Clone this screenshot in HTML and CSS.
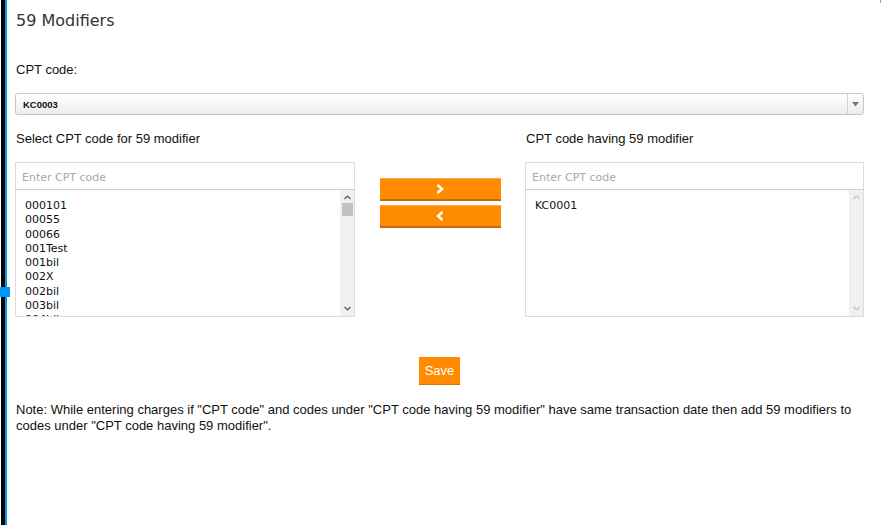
FILE: index.html
```html
<!DOCTYPE html>
<html lang="en">
<head>
    <meta charset="UTF-8">
    <title>59 Modifiers</title>
    <link rel="stylesheet" href="styles.css">
</head>
<body>
    <div class="shell">
        <div class="rail"></div>
        <div class="splitter-handle"></div>
        <div class="corner-mark"></div>

        <!-- Main panel -->
        <div class="content">
            <h1 class="title">59 Modifiers</h1>

            <p class="label top-label">CPT code:</p>
            <div class="select">
                <span class="select-value">KC0003</span>
                <span class="select-arrow">
                    <svg width="7" height="5" viewBox="0 0 7 5"><path d="M0 0 H7 L3.5 4.5 Z" fill="#777"/></svg>
                </span>
            </div>

            <div class="picker">
                <div class="column">
                    <p class="label">Select CPT code for 59 modifier</p>
                    <div class="search">Enter CPT code</div>
                    <div class="listbox">
                        <div class="items">
                            <div>000101</div>
                            <div>00055</div>
                            <div>00066</div>
                            <div>001Test</div>
                            <div>001bil</div>
                            <div>002X</div>
                            <div>002bil</div>
                            <div>003bil</div>
                            <div>004bil</div>
                        </div>
                        <div class="scrollbar">
                            <svg class="arrow" width="7" height="5" viewBox="0 0 7 5"><path d="M0.5 4 L3.5 1 L6.5 4" fill="none" stroke="#555" stroke-width="1.2"/></svg>
                            <div class="thumb"></div>
                            <div class="track"></div>
                            <svg class="arrow" width="7" height="5" viewBox="0 0 7 5"><path d="M0.5 1 L3.5 4 L6.5 1" fill="none" stroke="#555" stroke-width="1.2"/></svg>
                        </div>
                    </div>
                </div>

                <div class="movers">
                    <button class="move">
                        <svg width="8" height="10" viewBox="0 0 8 10"><path d="M1.5 1 L6 5 L1.5 9" fill="none" stroke="#fff" stroke-width="2.4"/></svg>
                    </button>
                    <button class="move">
                        <svg width="8" height="10" viewBox="0 0 8 10"><path d="M6.5 1 L2 5 L6.5 9" fill="none" stroke="#fff" stroke-width="2.4"/></svg>
                    </button>
                </div>

                <div class="column">
                    <p class="label">CPT code having 59 modifier</p>
                    <div class="search">Enter CPT code</div>
                    <div class="listbox">
                        <div class="items">
                            <div>KC0001</div>
                        </div>
                        <div class="scrollbar disabled">
                            <svg class="arrow" width="7" height="5" viewBox="0 0 7 5"><path d="M0.5 4 L3.5 1 L6.5 4" fill="none" stroke="#c4c4c4" stroke-width="1.2"/></svg>
                            <div class="track"></div>
                            <svg class="arrow" width="7" height="5" viewBox="0 0 7 5"><path d="M0.5 1 L3.5 4 L6.5 1" fill="none" stroke="#c4c4c4" stroke-width="1.2"/></svg>
                        </div>
                    </div>
                </div>
            </div>

            <div class="actions">
                <button class="save">Save</button>
            </div>

            <p class="note">Note: While entering charges if "CPT code" and codes under "CPT code having 59 modifier" have same transaction date then add 59 modifiers to codes under "CPT code having 59 modifier".</p>
        </div>
    </div>
</body>
</html>
```

FILE: styles.css
```css
body {
    margin: 0;
    padding: 0;
    background-color: #fff;
    font-family: 'Liberation Sans', Arial, sans-serif;
    color: #111;
}

.shell {
    display: flex;
    min-height: 525px;
    position: relative;
}

.rail {
    width: 4px;
    margin-left: 1px;
    background-color: #000;
}

/* little blue grip over the rail */
.splitter-handle {
    position: absolute;
    left: 0;
    top: 287px;
    width: 10px;
    height: 10px;
    background-color: #0094f5;
}

.corner-mark {
    position: absolute;
    right: 2px;
    top: 0;
    width: 1px;
    height: 3px;
    background-color: #9aa4b0;
}

.content {
    flex: 1;
    border-left: 2px solid #0094f5;
    padding: 0 19px 0 8px;
}

.title {
    margin: 11px 0 0 1px;
    font-family: 'DejaVu Sans', Verdana, sans-serif;
    font-size: 16px;
    font-weight: normal;
    line-height: 20px;
    color: #333;
}

.label {
    margin: 0;
    font-size: 13px;
    line-height: 16px;
    padding-left: 1px;
}

.top-label {
    margin-top: 31px;
    margin-bottom: 15px;
}

/* Dropdown */
.select {
    display: flex;
    align-items: center;
    height: 20px;
    border: 1px solid #c6c6c6;
    border-radius: 3px;
    background: linear-gradient(#ffffff, #ececec);
}

.select-value {
    flex: 1;
    padding-left: 7px;
    font-size: 9.5px;
    font-weight: bold;
    color: #111;
}

.select-arrow {
    width: 15px;
    height: 20px;
    display: flex;
    align-items: center;
    justify-content: center;
    border-left: 1px solid #d0d0d0;
}

/* Two lists with move buttons */
.picker {
    display: grid;
    grid-template-columns: 340px 170px 339px;
    margin-top: 16px;
}

.column .label {
    margin-bottom: 15px;
}

.search {
    height: 26px;
    line-height: 30px;
    border: 1px solid #dcdcdc;
    border-bottom-color: #cfcfcf;
    padding-left: 6px;
    font-family: 'DejaVu Sans', Verdana, sans-serif;
    font-size: 11px;
    color: #a8a8a8;
    overflow: hidden;
}

.listbox {
    display: flex;
    height: 126px;
    border: 1px solid #dcdcdc;
    border-top: none;
    overflow: hidden;
}

.items {
    flex: 1;
    padding: 9px 0 0 9px;
    font-family: 'DejaVu Sans', Verdana, sans-serif;
    font-size: 11px;
    line-height: 14.3px;
    color: #111;
}

.scrollbar {
    width: 14px;
    display: flex;
    flex-direction: column;
    align-items: center;
    background-color: #f0f0f0;
}

.scrollbar .arrow {
    margin: 5px 0;
}

.scrollbar .thumb {
    width: 11px;
    height: 13px;
    background-color: #c2c2c2;
    margin-top: -2px;
}

.scrollbar .track {
    flex: 1;
}

.movers {
    display: flex;
    flex-direction: column;
    align-items: center;
    gap: 4px;
    padding-top: 47px;
}

.move {
    width: 121px;
    height: 23px;
    border: none;
    border-top: 1px solid #ffa640;
    border-bottom: 2px solid #c46a10;
    background-color: #ff8c00;
    display: flex;
    align-items: center;
    justify-content: center;
    padding: 0;
    cursor: pointer;
}

.actions {
    display: flex;
    justify-content: center;
    margin-top: 40px;
}

.save {
    width: 41px;
    height: 28px;
    border: none;
    border-bottom: 1px solid #d27400;
    background-color: #ff8c00;
    color: #fff;
    font-family: 'Liberation Sans', Arial, sans-serif;
    font-size: 13px;
    padding: 0;
    cursor: pointer;
}

.note {
    margin: 17px 0 0 1px;
    font-size: 13px;
    line-height: 16px;
    color: #111;
}
```
